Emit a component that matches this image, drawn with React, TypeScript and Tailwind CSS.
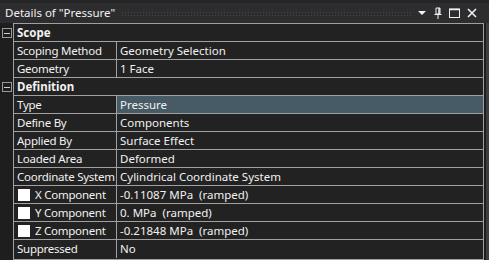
import React from 'react';

type Row =
    | { kind: 'group'; label: string }
    | { kind: 'prop'; label: string; value: string; check?: boolean; selected?: boolean };

const rows: Row[] = [
    { kind: 'group', label: 'Scope' },
    { kind: 'prop', label: 'Scoping Method', value: 'Geometry Selection' },
    { kind: 'prop', label: 'Geometry', value: '1 Face' },
    { kind: 'group', label: 'Definition' },
    { kind: 'prop', label: 'Type', value: 'Pressure', selected: true },
    { kind: 'prop', label: 'Define By', value: 'Components' },
    { kind: 'prop', label: 'Applied By', value: 'Surface Effect' },
    { kind: 'prop', label: 'Loaded Area', value: 'Deformed' },
    { kind: 'prop', label: 'Coordinate System', value: 'Cylindrical Coordinate System' },
    { kind: 'prop', label: 'X Component', value: '-0.11087 MPa  (ramped)', check: true },
    { kind: 'prop', label: 'Y Component', value: '0. MPa  (ramped)', check: true },
    { kind: 'prop', label: 'Z Component', value: '-0.21848 MPa  (ramped)', check: true },
    { kind: 'prop', label: 'Suppressed', value: 'No' },
];

const MinusBox = () => (
    <div className="w-[10px] h-[10px] border border-[#9a9a9a] flex items-center justify-center">
        <div className="w-[6px] h-px bg-[#d0d0d0]" />
    </div>
);

function TitleBar() {
    return (
        <div className="h-[23px] bg-[#2d2d30] border-t-[3px] border-[#252526] flex items-center pl-[5px] pr-[12px]">
            <span className="text-[11.5px] text-[#f1f1f1] whitespace-nowrap">Details of "Pressure"</span>
            <div
                className="flex-1 h-[5px] mx-[6px] bg-[radial-gradient(circle,#46464a_1px,transparent_1px)] bg-[length:3px_3px]"
            />
            <div className="flex items-center gap-[7px] text-[#f1f1f1]">
                <svg width="10" height="6" viewBox="0 0 10 6">
                    <path d="M1 1h8L5 5z" fill="#f1f1f1" />
                </svg>
                <svg width="8" height="12" viewBox="0 0 8 12">
                    <path d="M2 1h4v6H2zM0.5 7.5h7M4 8v4" stroke="#f1f1f1" strokeWidth="1" fill="none" />
                    <path d="M5 1v6" stroke="#f1f1f1" strokeWidth="1.5" />
                </svg>
                <svg width="11" height="10" viewBox="0 0 11 10">
                    <rect x="0.5" y="1" width="10" height="8.5" stroke="#f1f1f1" strokeWidth="1" fill="none" />
                    <path d="M0.5 1.5h10" stroke="#f1f1f1" strokeWidth="1.5" />
                </svg>
                <svg width="10" height="10" viewBox="0 0 10 10">
                    <path d="M1 1l8 8M9 1l-8 8" stroke="#f1f1f1" strokeWidth="1.6" />
                </svg>
            </div>
        </div>
    );
}

export default function App() {
    return (
        <div
            className="w-[489px] h-[260px] bg-[#1e1e1e] overflow-hidden"
            style={{ fontFamily: '"Noto Sans", "Open Sans", sans-serif' }}
        >
            <TitleBar />
            <div className="flex">
                {/* gutter with collapse boxes */}
                <div className="w-[13px] shrink-0 pt-px">
                    {rows.map((r, i) => (
                        <div key={i} className="h-[18px] flex items-center pl-[2px]">
                            {r.kind === 'group' && <MinusBox />}
                        </div>
                    ))}
                </div>
                <div className="w-[471px] border border-[#a0a0a0] bg-[#222222] text-[11.5px] text-[#f1f1f1]">
                    {rows.map((r, i) => {
                        const last = i === rows.length - 1;
                        const rowBorder = last ? '' : 'border-b border-[#a0a0a0]';
                        if (r.kind === 'group') {
                            return (
                                <div key={i} className={`h-[18px] flex items-center pl-[3px] font-bold ${rowBorder}`}>
                                    {r.label}
                                </div>
                            );
                        }
                        return (
                            <div key={i} className={`h-[18px] flex ${rowBorder}`}>
                                <div className="w-[103px] shrink-0 border-r border-[#a0a0a0] flex items-center pl-[3px] whitespace-nowrap tracking-[-0.25px]">
                                    {r.check && <span className="w-[12px] h-[12px] bg-white mr-[5px] ml-px shrink-0" />}
                                    {r.label}
                                </div>
                                <div
                                    className={`flex-1 flex items-center pl-[3px] whitespace-pre ${r.selected ? 'bg-[#465b66]' : ''}`}
                                >
                                    {r.value}
                                </div>
                            </div>
                        );
                    })}
                </div>
                <div className="w-[2px] shrink-0" />
                <div className="w-[3px] h-[237px] shrink-0 bg-[#3e3e42]" />
            </div>
        </div>
    );
}
